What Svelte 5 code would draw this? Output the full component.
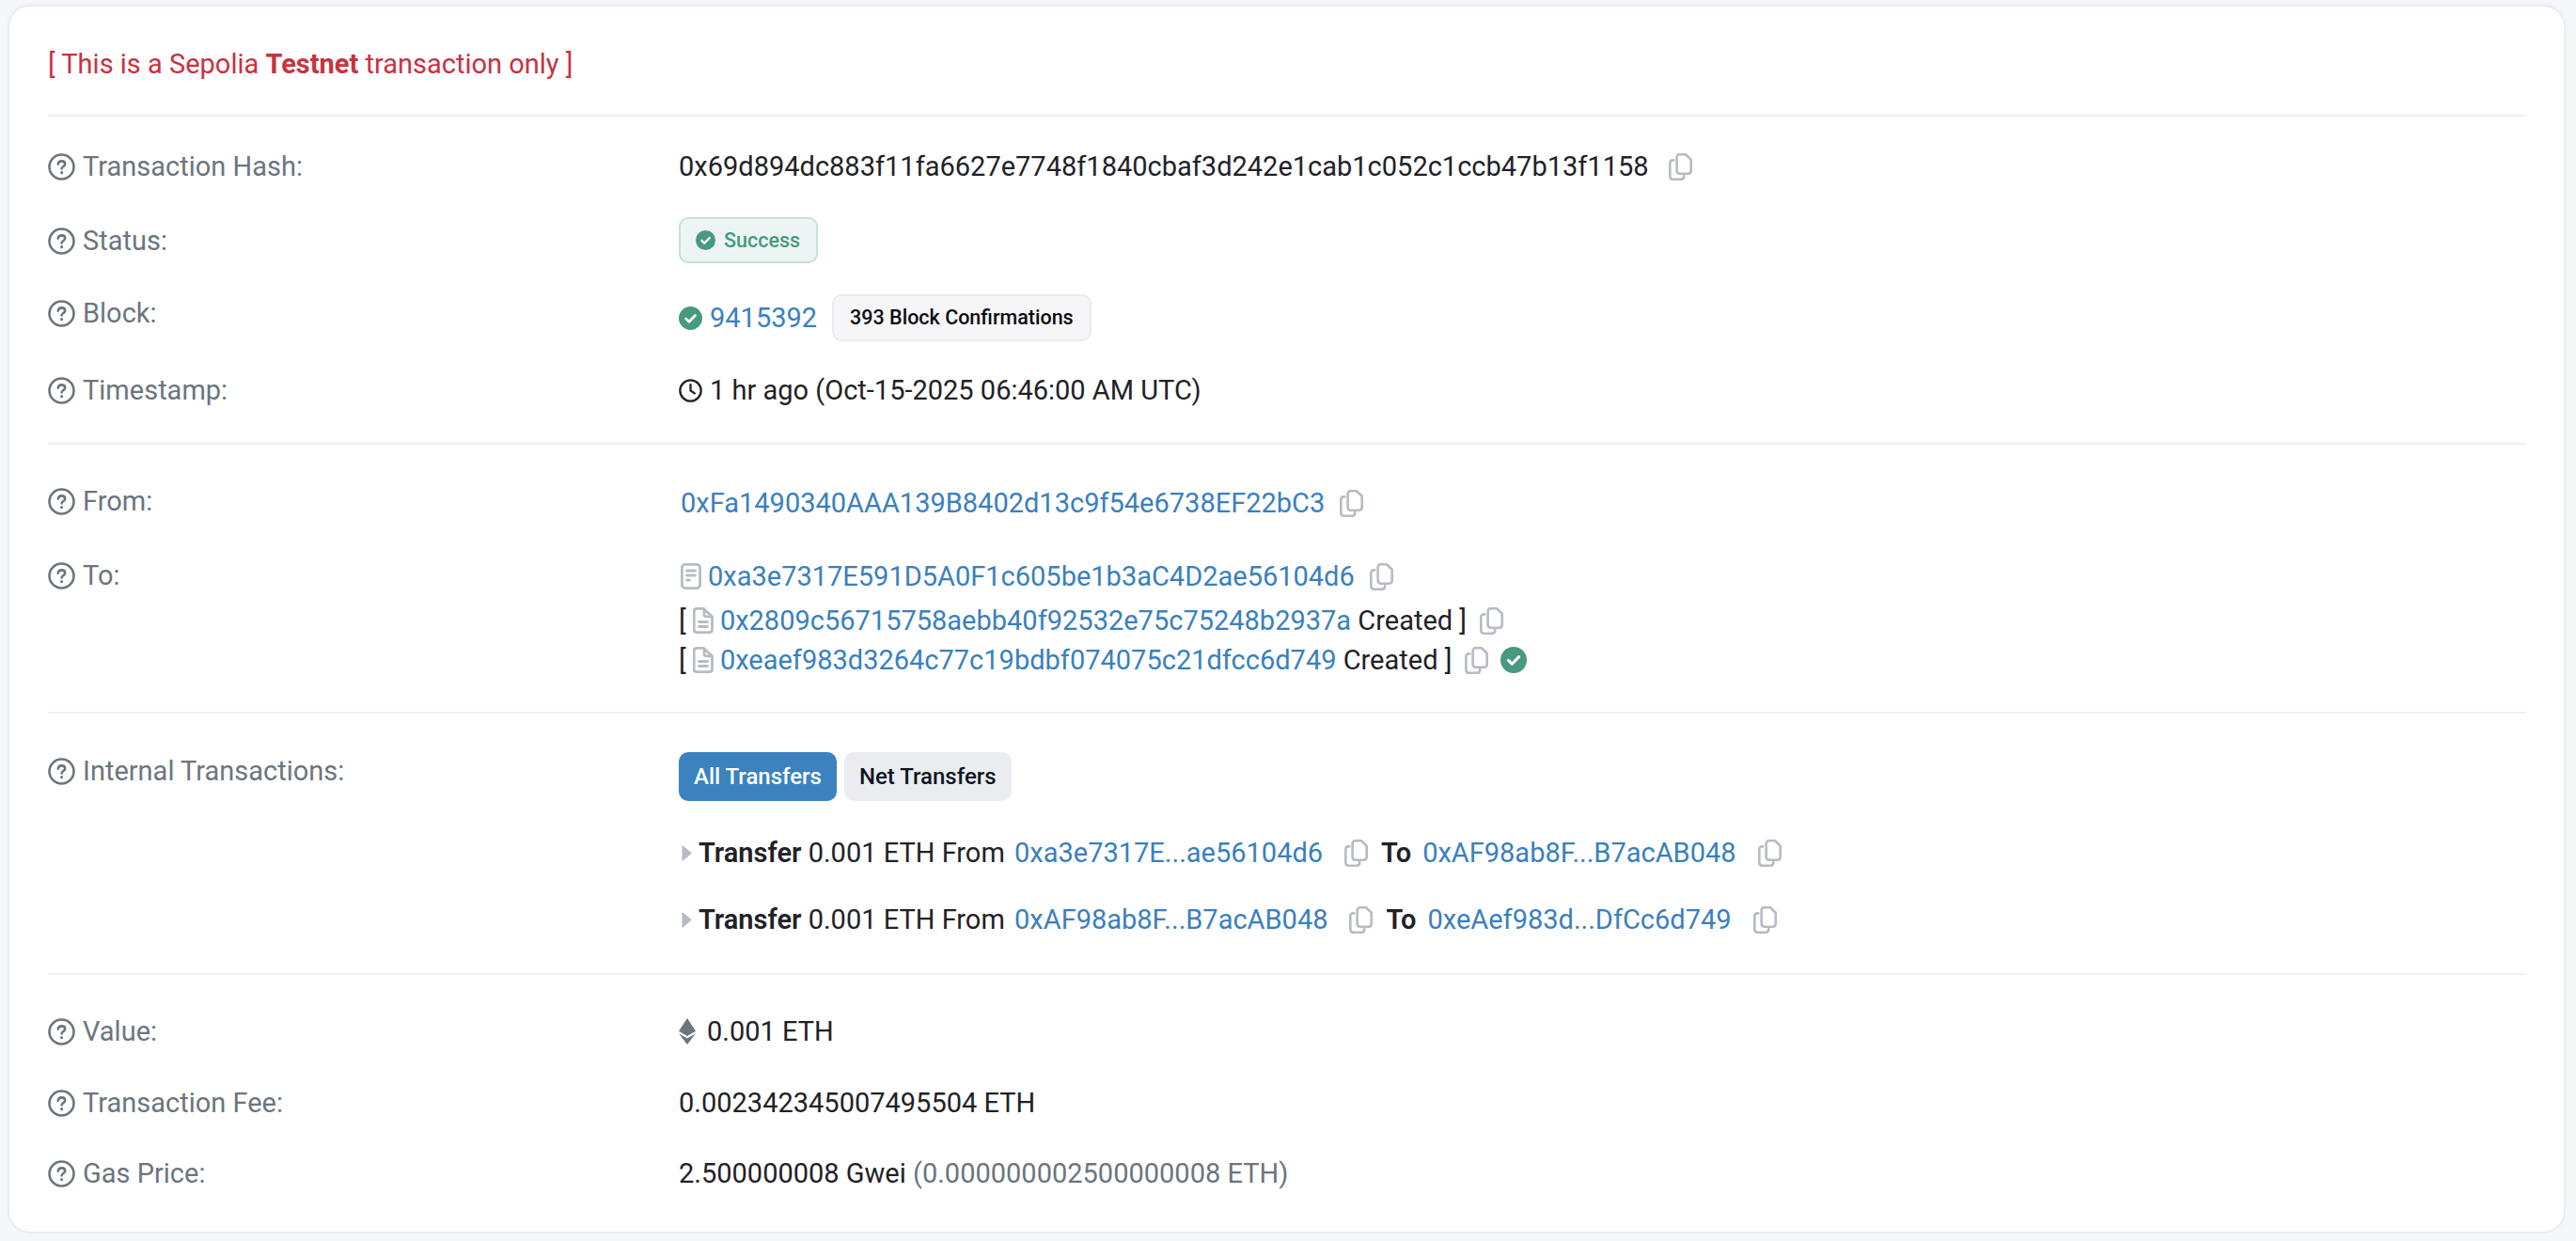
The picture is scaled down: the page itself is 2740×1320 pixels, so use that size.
{#snippet help()}
  <svg class="help" viewBox="0 0 29 29" fill="none" stroke="#6c757e" stroke-width="2.600" stroke-linecap="round">
    <circle cx="14.500" cy="14.500" r="13" />
    <path d="M10.800 11.600c.3-2 1.800-3.200 3.800-3.200 2.100 0 3.600 1.200 3.600 3 0 2.500-3.500 2.700-3.600 5" />
    <path d="M14.600 20.600v.2" stroke-width="3" />
  </svg>
{/snippet}

{#snippet copy(cls = "")}
  <svg class="copy {cls}" viewBox="0 0 25 29" fill="none" stroke="#b6bcc3" stroke-width="2.600" stroke-linejoin="round" stroke-linecap="round">
    <path d="M8.600 4.400c0-1.900 1.100-3.100 3-3.100h6.400l5.700 5.500v11.800c0 1.900-1.100 3.100-3 3.100h-9.100c-1.900 0-3-1.200-3-3.100z" />
    <path d="M5.200 7.400H4.300c-1.900 0-3 1.200-3 3.100v14.100c0 1.900 1.100 3.100 3 3.100h8.900c1.900 0 3-1.200 3-3.100v-.8" />
  </svg>
{/snippet}

{#snippet check(cls = "")}
  <svg class="check {cls}" viewBox="0 0 26 26">
    <circle cx="13" cy="13" r="13" fill="#479a80" />
    <path d="M7.800 13.400l3.600 3.500 6.800-7" fill="none" stroke="#fff" stroke-width="2.800" stroke-linecap="round" stroke-linejoin="round" />
  </svg>
{/snippet}

{#snippet contractFile()}
  <svg class="file" viewBox="0 0 22 28" fill="none" stroke="#b6bcc3" stroke-width="2.800" stroke-linejoin="round" stroke-linecap="round">
    <path d="M4 1.400h7.500l9 8.600v13.400c0 2-1.200 3.200-3.200 3.200H4c-1.800 0-2.800-1.200-2.800-3V4.400c0-1.800 1-3 2.800-3z" />
    <path d="M12 1.800v5.600c0 1.600.8 2.400 2.400 2.400h5.600" />
    <path d="M6.500 15.500h9M6.500 20.500h9" />
  </svg>
{/snippet}

{#snippet arrow()}
  <svg class="arrow" viewBox="0 0 10 16"><path d="M1 1.200l8 6.800-8 6.800z" fill="#b6bcc3" stroke="#b6bcc3" stroke-width="1.500" stroke-linejoin="round" /></svg>
{/snippet}

<div class="page">
  <main class="card">
    <p class="notice">[ This is a Sepolia <b>Testnet</b> transaction only ]</p>
    <hr />

    <section class="group first">
      <div class="row">
        <div class="label">{@render help()}Transaction Hash:</div>
        <div class="value">0x69d894dc883f11fa6627e7748f1840cbaf3d242e1cab1c052c1ccb47b13f1158{@render copy("wide hash")}</div>
      </div>
      <div class="row status-row">
        <div class="label">{@render help()}Status:</div>
        <div class="value"><span class="pill success">{@render check("small")}Success</span></div>
      </div>
      <div class="row block-row">
        <div class="label">{@render help()}Block:</div>
        <div class="value block-value">{@render check()}<a href="#block">9415392</a><span class="pill confirm">393 Block Confirmations</span></div>
      </div>
      <div class="row time-row">
        <div class="label">{@render help()}Timestamp:</div>
        <div class="value">
          <svg class="clock" viewBox="0 0 26 26" fill="none" stroke="#1f2227" stroke-width="2.400" stroke-linecap="round" stroke-linejoin="round">
            <circle cx="13" cy="13" r="11.600" />
            <path d="M13 6.500V13l4.500 3" />
          </svg>
          1 hr ago (Oct-15-2025 06:46:00 AM UTC)
        </div>
      </div>
    </section>
    <hr />

    <section class="group second">
      <div class="row">
        <div class="label">{@render help()}From:</div>
        <div class="value from"><a href="#from">0xFa1490340AAA139B8402d13c9f54e6738EF22bC3</a>{@render copy("wide")}</div>
      </div>
      <div class="row to-row">
        <div class="label">{@render help()}To:</div>
        <div class="to-lines">
          <div class="value contract">
            <svg class="file" viewBox="0 0 22 28" fill="none" stroke="#b6bcc3" stroke-width="2.800" stroke-linecap="round">
              <rect x="1.400" y="1.400" width="19.200" height="25.200" rx="3.400" />
              <path d="M6.500 8h9M6.500 13h9M6.500 18h3" />
            </svg>
            <a href="#to">0xa3e7317E591D5A0F1c605be1b3aC4D2ae56104d6</a>{@render copy("wide")}
          </div>
          <div class="value created">[&nbsp;{@render contractFile()}<a href="#c1">0x2809c56715758aebb40f92532e75c75248b2937a</a>&nbsp;Created ]{@render copy()}</div>
          <div class="value">[&nbsp;{@render contractFile()}<a href="#c2">0xeaef983d3264c77c19bdbf074075c21dfcc6d749</a>&nbsp;Created ]{@render copy()}{@render check("after")}</div>
        </div>
      </div>
    </section>
    <hr />

    <section class="group third">
      <div class="row">
        <div class="label">{@render help()}Internal Transactions:</div>
        <div class="internal">
          <div class="tabs">
            <button class="tab active">All Transfers</button>
            <button class="tab">Net Transfers</button>
          </div>
          <div class="value transfer">{@render arrow()}<b>Transfer</b>&nbsp;0.001 ETH From&nbsp;<a href="#t1">0xa3e7317E...ae56104d6</a>{@render copy("gap")}<b class="to">To</b><a href="#t2">0xAF98ab8F...B7acAB048</a>{@render copy("gap")}</div>
          <div class="value transfer">{@render arrow()}<b>Transfer</b>&nbsp;0.001 ETH From&nbsp;<a href="#t3">0xAF98ab8F...B7acAB048</a>{@render copy("gap")}<b class="to">To</b><a href="#t4">0xeAef983d...DfCc6d749</a>{@render copy("gap")}</div>
        </div>
      </div>
    </section>
    <hr />

    <section class="group last">
      <div class="row">
        <div class="label">{@render help()}Value:</div>
        <div class="value">
          <svg class="eth" viewBox="0 0 18 28" fill="#6c757e">
            <path d="M9 0l9 13.800-9 5.200-9-5.200z" />
            <path d="M0 16.200l9 5.200 9-5.200-9 11.800z" />
          </svg>
          0.001 ETH
        </div>
      </div>
      <div class="row fee-row">
        <div class="label">{@render help()}Transaction Fee:</div>
        <div class="value">0.002342345007495504 ETH</div>
      </div>
      <div class="row gas-row">
        <div class="label">{@render help()}Gas Price:</div>
        <div class="value">2.500000008 Gwei&nbsp;<span class="muted">(0.000000002500000008 ETH)</span></div>
      </div>
    </section>
  </main>
</div>

<style>
  :global(body) {
    margin: 0;
    background: #f6f7fb;
  }

  .page {
    padding: 5px 11px 6px 8px;
    font-family: Roboto, "Liberation Sans", sans-serif;
    font-size: 29px;
    line-height: 40px;
    color: #1f2227;
  }

  .card {
    padding: 0 40px 0 41px;
    background: #fff;
    border: 2px solid #ebecf1;
    border-radius: 24px;
    box-shadow: 0 -2px 4px rgba(30, 40, 80, 0.03);
  }

  .notice {
    margin: 0;
    padding: 41px 0 34px;
    color: #c9323f;
  }

  hr {
    margin: 0;
    border: 0;
    border-top: 2px solid #eff0f3;
  }

  .first {
    padding: 33px 0 36px;
  }
  .second {
    padding: 40px 0 35px;
  }
  .third {
    padding: 41px 0 37px;
  }
  .last {
    padding: 40px 0 42px;
  }

  .row {
    display: grid;
    grid-template-columns: 671px 1fr;
    align-items: start;
  }

  .status-row {
    margin-top: 39px;
  }
  .block-row {
    margin-top: 37px;
  }
  .time-row {
    margin-top: 37px;
  }
  .to-row {
    margin-top: 37px;
  }
  .fee-row {
    margin-top: 36px;
  }
  .gas-row {
    margin-top: 35px;
  }

  .label {
    display: flex;
    align-items: center;
    gap: 8px;
    color: #6c757e;
  }

  .help {
    width: 29px;
    height: 29px;
    flex: none;
  }

  .value {
    display: flex;
    align-items: center;
    white-space: nowrap;
  }

  a {
    color: #3a80bd;
    text-decoration: none;
  }

  b {
    font-weight: 700;
  }

  .copy {
    width: 25px;
    height: 29px;
    flex: none;
    margin-left: 14px;
  }
  .copy.wide {
    margin-left: 16px;
  }
  .copy.hash {
    margin-left: 21px;
  }
  .copy.gap {
    margin-left: 23px;
    margin-right: 14px;
  }

  .check {
    width: 25px;
    height: 25px;
    flex: none;
    margin-right: 8px;
  }
  .check.small {
    width: 21px;
    height: 21px;
    margin-right: 9px;
  }
  .check.after {
    width: 28px;
    height: 28px;
    margin: 0 0 0 13px;
  }

  .pill {
    display: inline-flex;
    align-items: center;
    box-sizing: border-box;
    margin-block: -5px;
    border-radius: 10px;
    font-size: 21.500px;
    font-weight: 500;
  }
  .success {
    height: 49px;
    padding: 0 17px 0 16px;
    color: #479a80;
    background: #ecf5f3;
    border: 2px solid #c3e2d9;
  }
  .confirm {
    height: 50px;
    margin-left: 16px;
    padding: 0 17px;
    color: #0a0c10;
    background: #f6f6f8;
    border: 2px solid #eaebf0;
  }
  .block-value {
    margin-top: 5px;
  }

  .clock {
    width: 25px;
    height: 25px;
    flex: none;
    margin-right: 8px;
  }

  .file {
    width: 22px;
    height: 28px;
    flex: none;
    margin-right: 7px;
  }

  .from {
    margin-top: 2px;
    padding-left: 2px;
  }
  .contract {
    margin-top: 1px;
    padding-left: 2px;
  }

  .to-lines {
    display: flex;
    flex-direction: column;
    gap: 2px;
  }
  .created {
    margin-top: 5px;
  }

  .internal {
    display: flex;
    flex-direction: column;
  }

  .tabs {
    display: flex;
    gap: 8px;
    margin-bottom: 35px;
  }
  .tab {
    height: 52px;
    padding: 0 16px;
    border: 0;
    border-radius: 10px;
    font: 500 24px Roboto, "Liberation Sans", sans-serif;
    background: #ebecf0;
    color: #0c1524;
  }
  .tab.active {
    background: #3b82bf;
    color: #fff;
  }

  .transfer {
    margin-bottom: 31px;
  }
  .transfer:last-child {
    margin-bottom: 0;
  }
  .transfer b {
    font-weight: 600;
  }
  .transfer a {
    margin-left: 3px;
  }

  .arrow {
    width: 11px;
    height: 17px;
    flex: none;
    margin: 0 7px 0 3px;
  }

  .to {
    margin-right: 9px;
  }

  .eth {
    width: 18px;
    height: 28px;
    flex: none;
    margin-right: 12px;
  }

  .muted {
    color: #6c757e;
  }
</style>
